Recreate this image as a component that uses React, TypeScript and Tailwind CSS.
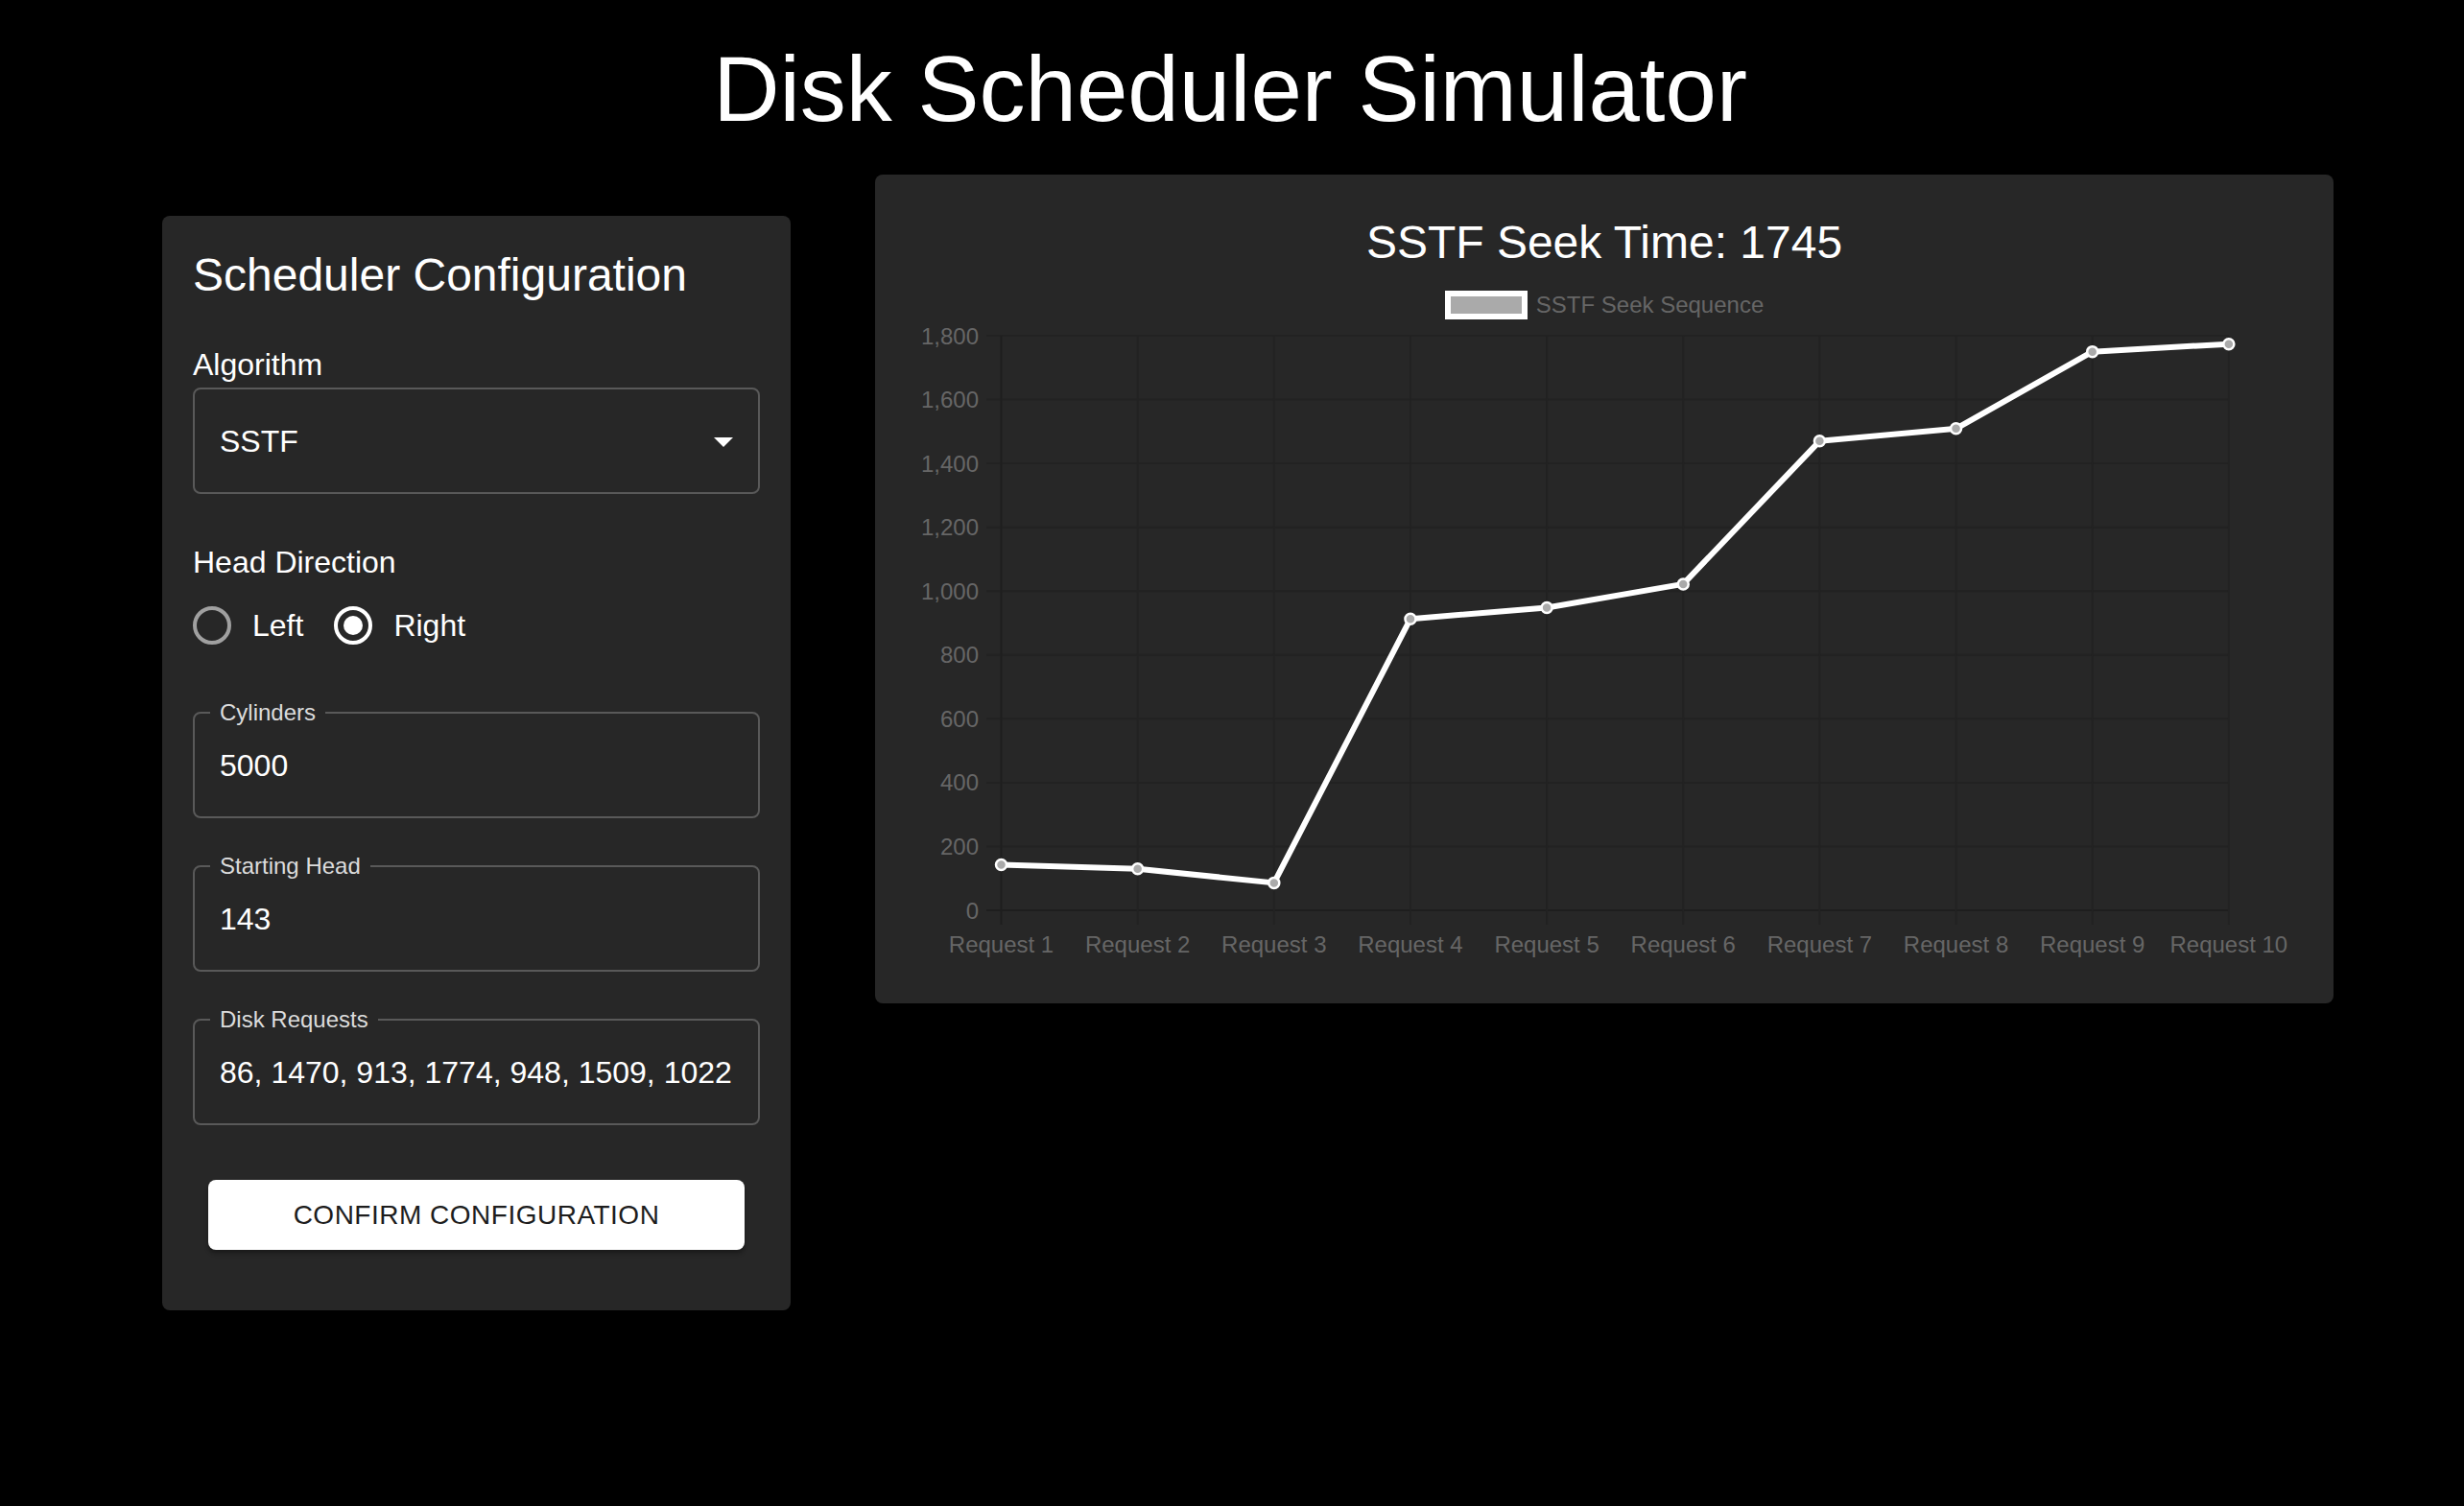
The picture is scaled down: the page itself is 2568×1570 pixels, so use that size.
import React, { useState } from "react";

const FONT = { fontFamily: '"Liberation Sans", Arial, Helvetica, sans-serif' };

const seekSequence = [143, 130, 86, 913, 948, 1022, 1470, 1509, 1750, 1774];
const yTicks = [0, 200, 400, 600, 800, 1000, 1200, 1400, 1600, 1800];

// plot geometry (svg coords)
const X0 = 131.5;
const DX = 142.15;
const Y0 = 616;
const YTOP = 17;
const SCALE = (Y0 - YTOP) / 1800;

const xAt = (i: number) => X0 + i * DX;
const yAt = (v: number) => Y0 - v * SCALE;

const RadioIcon = ({ checked }: { checked: boolean }) => (
  <svg width="48" height="48" viewBox="0 0 48 48">
    <circle
      cx="24"
      cy="24"
      r="18"
      fill="none"
      stroke={checked ? "#ffffff" : "#a0a0a0"}
      strokeWidth="4"
    />
    {checked && <circle cx="24" cy="24" r="10" fill="#ffffff" />}
  </svg>
);

const OutlinedField = ({ label, value }: { label: string; value: string }) => (
  <div className="relative h-[111px] rounded-[8px] border-2 border-[#595959] flex items-center">
    <span className="absolute left-[16px] top-[-16px] bg-[#272727] px-[10px] text-[24px] leading-[29px] text-[#dcdcdc]">
      {label}
    </span>
    <input
      defaultValue={value}
      className="w-full min-w-0 bg-transparent outline-none px-[26px] text-[32px] leading-[40px] text-white"
      style={FONT}
    />
  </div>
);

const ConfigPanel = () => {
  const [direction, setDirection] = useState<"left" | "right">("right");

  return (
    <div className="w-[655px] mt-[43px] rounded-[8px] bg-[#272727] px-[32px] pt-[30px] pb-[63px]">
      <h2 className="text-[48px] leading-[64px] text-white">Scheduler Configuration</h2>

      <div className="mt-[38px] text-[32px] leading-[47px] text-white">Algorithm</div>
      <div className="relative h-[111px] rounded-[8px] border-2 border-[#595959] flex items-center justify-between">
        <span className="pl-[26px] text-[32px] leading-[40px] text-white">SSTF</span>
        <svg width="48" height="48" viewBox="0 0 24 24" className="mr-[12px]">
          <path d="M7 10l5 5 5-5z" fill="#ffffff" />
        </svg>
      </div>

      <div className="mt-[47px] text-[32px] leading-[48px] text-white">Head Direction</div>
      <div className="flex items-center h-[84px] -ml-[22px] gap-[10px]">
        {(["left", "right"] as const).map((d) => (
          <label
            key={d}
            className="flex items-center cursor-pointer"
            onClick={() => setDirection(d)}
          >
            <span className="w-[84px] h-[84px] flex items-center justify-center">
              <RadioIcon checked={direction === d} />
            </span>
            <span className="text-[32px] leading-[40px] text-white">
              {d === "left" ? "Left" : "Right"}
            </span>
          </label>
        ))}
      </div>

      <div className="mt-[48px] flex flex-col gap-[49px]">
        <OutlinedField label="Cylinders" value="5000" />
        <OutlinedField label="Starting Head" value="143" />
        <OutlinedField
          label="Disk Requests"
          value="86, 1470, 913, 1774, 948, 1509, 1022, 1750, 130"
        />
      </div>

      <div className="mt-[57px] px-[16px]">
        <button className="w-full h-[73px] rounded-[8px] bg-white text-[28px] tracking-[0.5px] text-[#1d1d1d] shadow-[0_4px_4px_rgba(0,0,0,0.3)]">
          CONFIRM CONFIGURATION
        </button>
      </div>
    </div>
  );
};

const SeekChart = () => {
  const points = seekSequence.map((v, i) => `${xAt(i)},${yAt(v)}`).join(" ");
  const xEnd = xAt(seekSequence.length - 1);

  return (
    <div className="w-[1520px] rounded-[8px] bg-[#272727] pt-[42px] pb-[33px]">
      <div className="text-center text-[48px] leading-[58px] text-white">
        SSTF Seek Time: 1745
      </div>
      <div className="mt-[21px] flex items-center justify-center gap-[9px]">
        <div className="w-[86px] h-[30px] border-[6px] border-white bg-[#aaaaaa]" />
        <span className="text-[24px] leading-[30px] text-[#666666]">SSTF Seek Sequence</span>
      </div>

      <svg width="1520" height="680" className="block" style={FONT}>
        {/* grid */}
        {yTicks.map((t) => (
          <line
            key={"h" + t}
            x1={116}
            x2={xEnd}
            y1={yAt(t)}
            y2={yAt(t)}
            stroke={t === 0 ? "#1e1e1e" : "#222222"}
            strokeWidth="2"
          />
        ))}
        {seekSequence.map((_, i) => (
          <line
            key={"v" + i}
            x1={xAt(i)}
            x2={xAt(i)}
            y1={YTOP}
            y2={631}
            stroke={i === 0 ? "#1e1e1e" : "#222222"}
            strokeWidth="2"
          />
        ))}

        {/* y labels */}
        {yTicks.map((t) => (
          <text
            key={"yl" + t}
            x={108}
            y={yAt(t) + 8.5}
            textAnchor="end"
            fontSize="24"
            fill="#666666"
          >
            {t.toLocaleString("en-US")}
          </text>
        ))}

        {/* x labels */}
        {seekSequence.map((_, i) => (
          <text
            key={"xl" + i}
            x={xAt(i)}
            y={659.7}
            textAnchor="middle"
            fontSize="24"
            fill="#666666"
          >
            {`Request ${i + 1}`}
          </text>
        ))}

        {/* line */}
        <polyline
          points={points}
          fill="none"
          stroke="#ffffff"
          strokeWidth="6"
          strokeLinejoin="round"
        />
        {seekSequence.map((v, i) => (
          <circle
            key={"p" + i}
            cx={xAt(i)}
            cy={yAt(v)}
            r="5.5"
            fill="#aaaaaa"
            stroke="#ffffff"
            strokeWidth="2.5"
          />
        ))}
      </svg>
    </div>
  );
};

const App = () => {
  return (
    <main className="min-h-[1570px] w-full bg-black" style={FONT}>
      <h1 className="pt-[37px] pr-[4px] text-center text-[96px] leading-[112px] text-white">
        Disk Scheduler Simulator
      </h1>
      <div className="mt-[33px] flex items-start gap-[88px] pl-[169px]">
        <ConfigPanel />
        <SeekChart />
      </div>
    </main>
  );
};

export default App;
